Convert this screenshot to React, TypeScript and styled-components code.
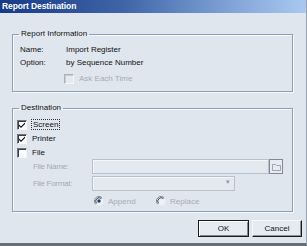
import React from "react";
import styled, { createGlobalStyle } from "styled-components";

const GlobalStyle = createGlobalStyle`
  html, body {
    margin: 0;
    padding: 0;
    background: #e0e6ee;
  }
  * {
    box-sizing: border-box;
  }
`;

const CheckMark: React.FC = () => (
  <svg width="8" height="8" viewBox="0 0 8 8">
    <path d="M1 3.5 L3 5.5 L7 1.5 L7 3 L3 7 L1 5 Z" fill="#000" />
  </svg>
);

const Radio: React.FC<{ on?: boolean }> = ({ on }) => (
  <svg width="10" height="10" viewBox="0 0 10 10">
    <circle cx="5" cy="5" r="4.5" fill="#eef1f5" />
    <path d="M8.2 1.8 A4.5 4.5 0 0 0 1.8 8.2" stroke="#7d8896" strokeWidth="1" fill="none" />
    <path d="M7.4 2.6 A3.4 3.4 0 0 0 2.6 7.4" stroke="#404850" strokeWidth="1" fill="none" />
    {on && <circle cx="5" cy="5" r="1.7" fill="#1d3f6e" />}
  </svg>
);

const App: React.FC = () => {
  return (
    <Window>
      <GlobalStyle />
      <TitleBar>Report Destination</TitleBar>
      <Body>
        <Group $height={63}>
          <Legend>Report Information</Legend>
          <InfoRow>
            <InfoLabel>Name:</InfoLabel>
            <span>Import Register</span>
          </InfoRow>
          <InfoRow>
            <InfoLabel>Option:</InfoLabel>
            <span>by Sequence Number</span>
          </InfoRow>
          <AskRow>
            <Box $disabled />
            <Muted>Ask Each Time</Muted>
          </AskRow>
        </Group>

        <Group $height={109} $top={11}>
          <Legend>Destination</Legend>
          <CheckRow $first>
            <Box>
              <CheckMark />
            </Box>
            <Focused>Screen</Focused>
          </CheckRow>
          <CheckRow>
            <Box>
              <CheckMark />
            </Box>
            <span>Printer</span>
          </CheckRow>
          <CheckRow>
            <Box />
            <span>File</span>
          </CheckRow>
          <FieldRow>
            <FieldLabel>File Name:</FieldLabel>
            <TextField $width={177} />
            <BrowseButton>
              <svg width="9" height="8" viewBox="0 0 9 8">
                <path d="M0.5 1.5 H3.5 L4.5 2.5 H8.5 V7.5 H0.5 Z" fill="none" stroke="#9aa6b4" />
              </svg>
            </BrowseButton>
          </FieldRow>
          <FieldRow $gap={2}>
            <FieldLabel>File Format:</FieldLabel>
            <TextField $width={143}>
              <Arrow>▾</Arrow>
            </TextField>
          </FieldRow>
          <RadioRow>
            <RadioItem $width={62}>
              <Radio on />
              <Muted>Append</Muted>
            </RadioItem>
            <RadioItem>
              <Radio />
              <Muted>Replace</Muted>
            </RadioItem>
          </RadioRow>
        </Group>

        <ButtonRow>
          <Button $default>OK</Button>
          <Button>Cancel</Button>
        </ButtonRow>
      </Body>
    </Window>
  );
};

const Window = styled.div`
  width: 307px;
  height: 246px;
  display: flex;
  flex-direction: column;
  background: #e0e6ee;
  border-right: 1px solid #9aa3ae;
  border-bottom: 3px solid #6b6e73;
  font-family: "Liberation Sans", Arial, sans-serif;
  font-size: 8px;
  color: #111;
  overflow: hidden;
`;

const TitleBar = styled.div`
  height: 13px;
  line-height: 13px;
  padding-left: 2px;
  background: linear-gradient(90deg, #173a86 0%, #3f64a6 40%, #7fa3d6 75%, #a9c9f0 100%);
  color: #fff;
  font-weight: bold;
  font-size: 8.5px;
  letter-spacing: -0.1px;
`;

const Body = styled.div`
  display: flex;
  flex-direction: column;
  padding: 16px 0 0 12px;
`;

const Group = styled.fieldset<{ $height: number; $top?: number }>`
  width: 281px;
  height: ${(p) => p.$height}px;
  margin: ${(p) => p.$top || 0}px 0 0 0;
  padding: 0 0 0 7px;
  border: 1px solid #8d9fb6;
  box-shadow: inset 1px 1px 0 #f6f8fb, 1px 1px 0 #f6f8fb;
  display: flex;
  flex-direction: column;
`;

const Legend = styled.legend`
  margin-left: -1px;
  padding: 0 2px;
  line-height: 10px;
  height: 10px;
`;

const InfoRow = styled.div`
  display: flex;
  align-items: center;
  height: 13px;
  &:first-of-type {
    margin-top: 4px;
  }
`;

const InfoLabel = styled.span`
  width: 46px;
`;

const AskRow = styled.div`
  display: flex;
  align-items: center;
  gap: 5px;
  height: 13px;
  margin: 3px 0 0 44px;
`;

const Box = styled.span<{ $disabled?: boolean }>`
  width: 10px;
  height: 10px;
  display: inline-flex;
  align-items: center;
  justify-content: center;
  background: ${(p) => (p.$disabled ? "#e6eaf0" : "#fbfcfd")};
  border-top: 1px solid ${(p) => (p.$disabled ? "#a9b1bc" : "#6d747d")};
  border-left: 1px solid ${(p) => (p.$disabled ? "#a9b1bc" : "#6d747d")};
  border-right: 1px solid #f4f6f9;
  border-bottom: 1px solid #f4f6f9;
  box-shadow: inset 1px 1px 0 ${(p) => (p.$disabled ? "#c5ccd5" : "#3a3f46")};
`;

const Muted = styled.span`
  color: #a4acb8;
`;

const CheckRow = styled.div<{ $first?: boolean }>`
  display: flex;
  align-items: center;
  gap: 5px;
  height: 13px;
  margin-left: -3px;
  margin-top: ${(p) => (p.$first ? 5 : 1)}px;
`;

const Focused = styled.span`
  outline: 1px dotted #333;
  outline-offset: 0;
  padding: 0 1px;
`;

const FieldRow = styled.div<{ $gap?: number }>`
  display: flex;
  align-items: center;
  height: 15px;
  margin: ${(p) => p.$gap || 0}px 0 0 13px;
  color: #a4acb8;
`;

const FieldLabel = styled.span`
  width: 59px;
  letter-spacing: -0.3px;
`;

const TextField = styled.div<{ $width: number }>`
  position: relative;
  width: ${(p) => p.$width}px;
  height: 15px;
  background: #e4e9f0;
  border: 1px solid #b7c1cd;
  box-shadow: inset 1px 1px 0 #f4f6f9;
`;

const Arrow = styled.span`
  position: absolute;
  right: 4px;
  top: 1px;
  font-size: 7px;
  color: #8c96a3;
`;

const BrowseButton = styled.div`
  width: 14px;
  height: 15px;
  display: flex;
  align-items: center;
  justify-content: center;
  border: 1px solid #7f8a98;
  background: #e8ecf2;
`;

const RadioRow = styled.div`
  display: flex;
  align-items: center;
  height: 12px;
  margin: 4px 0 0 74px;
`;

const RadioItem = styled.div<{ $width?: number }>`
  display: flex;
  align-items: center;
  gap: 4px;
  width: ${(p) => (p.$width ? `${p.$width}px` : "auto")};
`;

const ButtonRow = styled.div`
  display: flex;
  justify-content: flex-end;
  gap: 3px;
  margin-top: 8px;
  padding-right: 4px;
`;

const Button = styled.div<{ $default?: boolean }>`
  width: ${(p) => (p.$default ? 51 : 50)}px;
  height: 17px;
  display: flex;
  align-items: center;
  justify-content: center;
  background: #e6ebf1;
  border: 1px solid ${(p) => (p.$default ? "#1a1a1a" : "#f7f9fb")};
  border-right-color: #1a1a1a;
  border-bottom-color: #1a1a1a;
  box-shadow: ${(p) =>
    p.$default
      ? "inset 1px 1px 0 #fff, inset -1px -1px 0 #7c8590"
      : "inset -1px -1px 0 #8a939e"};
  color: #111;
`;

export default App;
